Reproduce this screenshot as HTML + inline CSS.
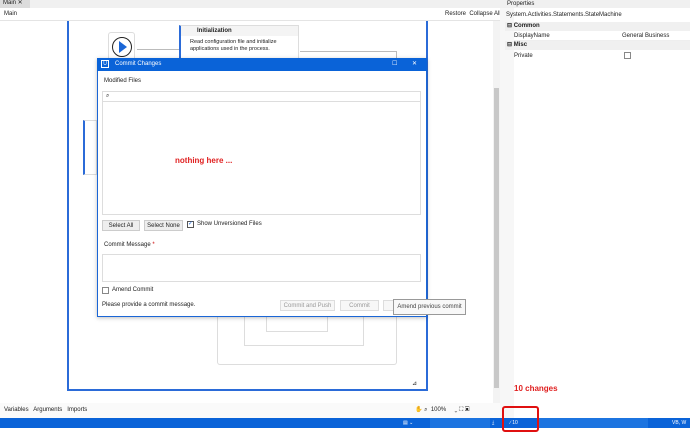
<!DOCTYPE html>
<html><head><style>
*{box-sizing:border-box;margin:0;padding:0}
body{width:690px;height:428px;overflow:hidden;background:#fff;font-family:"Liberation Sans",sans-serif;font-size:6px;color:#222;position:relative}
.a{position:absolute}
.btn{position:absolute;border:1px solid #ccc;background:#eee;font-size:6px;text-align:center;line-height:10px}
.dis{background:#f7f7f7;color:#999;border-color:#ddd}
</style></head><body>
<!-- tab bar -->
<div class="a" style="left:0;top:0;width:500px;height:8px;background:#f0f0f0"></div>
<div class="a" style="left:0;top:0;width:30px;height:8px;background:#dcdcdc;font-size:6px;line-height:7px;padding-left:3px">Main ✕</div>
<div class="a" style="left:0;top:8px;width:500px;height:13px;background:#fff;border-bottom:1px solid #e4e4e4;line-height:13px;padding-left:4px">Main</div>
<div class="a" style="left:445px;top:8px;line-height:13px">Restore&nbsp; Collapse All</div>
<!-- scrollbar -->
<div class="a" style="left:493px;top:21px;width:7px;height:382px;background:#f3f3f3"></div>
<div class="a" style="left:494px;top:88px;width:5px;height:300px;background:#c8c8c8"></div>
<!-- canvas frame -->
<div class="a" style="left:67px;top:21px;width:361px;height:370px;border:2px solid #2b6bd8;border-top:none"></div>
<!-- start circle -->
<div class="a" style="left:108px;top:32px;width:27px;height:30px;border:1px solid #ddd;border-radius:3px"></div>
<div class="a" style="left:112px;top:37px;width:20px;height:20px;border:1.5px solid #222;border-radius:50%"></div>
<div class="a" style="left:119px;top:41px;width:0;height:0;border-left:8px solid #1a66d6;border-top:6px solid transparent;border-bottom:6px solid transparent"></div>
<div class="a" style="left:137px;top:49px;width:42px;height:1px;background:#bbb"></div>
<!-- init box -->
<div class="a" style="left:179px;top:25px;width:120px;height:34px;border:1px solid #ddd;border-left:2px solid #2b6bd8;background:#fff"></div>
<div class="a" style="left:181px;top:26px;width:117px;height:10px;background:#f4f4f4;font-weight:bold;padding-left:16px;line-height:10px">Initialization</div>
<div class="a" style="left:190px;top:39px;font-size:5.5px;line-height:7px">Read configuration file and initialize<br>applications used in the process.</div>
<div class="a" style="left:300px;top:51px;width:96px;height:1px;background:#bbb"></div>
<div class="a" style="left:396px;top:51px;width:1px;height:10px;background:#bbb"></div>
<!-- left partial box -->
<div class="a" style="left:83px;top:120px;width:14px;height:55px;border:1px solid #ddd;border-left:2px solid #2b6bd8"></div>
<!-- lower nested boxes -->
<div class="a" style="left:217px;top:316px;width:180px;height:49px;border:1px solid #ddd;border-top:none;border-radius:0 0 3px 3px"></div>
<div class="a" style="left:244px;top:316px;width:120px;height:30px;border:1px solid #ddd;border-top:none"></div>
<div class="a" style="left:266px;top:316px;width:62px;height:16px;border:1px solid #ddd;border-top:none"></div>
<div class="a" style="left:412px;top:380px;font-size:6px">⊿</div>
<!-- dialog -->
<div class="a" style="left:97px;top:58px;width:330px;height:259px;border:1px solid #1a66d6;background:#fff;box-shadow:0 1px 4px rgba(0,0,0,.25)"></div>
<div class="a" style="left:97px;top:58px;width:330px;height:13px;background:#0a63d8;color:#fff;line-height:13px;padding-left:18px">Commit Changes</div>
<div class="a" style="left:101px;top:60px;width:8px;height:8px;border:1px solid #fff;color:#fff;font-size:5px;line-height:6px;text-align:center">U</div>
<div class="a" style="left:392px;top:58px;color:#fff;line-height:13px">☐</div>
<div class="a" style="left:412px;top:58px;color:#fff;line-height:13px">✕</div>
<div class="a" style="left:104px;top:78px">Modified Files</div>
<div class="a" style="left:102px;top:91px;width:319px;height:124px;border:1px solid #ddd"></div>
<div class="a" style="left:102px;top:91px;width:319px;height:11px;border:1px solid #ddd;padding-left:3px;line-height:9px">⌕</div>
<div class="a" style="left:175px;top:156px;color:#e02020;font-weight:bold;font-size:8px">nothing here ...</div>
<div class="btn" style="left:102px;top:220px;width:38px;height:11px">Select All</div>
<div class="btn" style="left:144px;top:220px;width:39px;height:11px">Select None</div>
<div class="a" style="left:187px;top:221px;width:7px;height:7px;border:1px solid #555;color:#1a66d6;font-size:6px;line-height:5px">✓</div>
<div class="a" style="left:197px;top:221px">Show Unversioned Files</div>
<div class="a" style="left:104px;top:242px">Commit Message <span style="color:#c00">*</span></div>
<div class="a" style="left:102px;top:254px;width:319px;height:28px;border:1px solid #ddd"></div>
<div class="a" style="left:102px;top:287px;width:7px;height:7px;border:1px solid #888"></div>
<div class="a" style="left:112px;top:287px">Amend Commit</div>
<div class="a" style="left:102px;top:302px">Please provide a commit message.</div>
<div class="btn dis" style="left:280px;top:300px;width:55px;height:11px">Commit and Push</div>
<div class="btn dis" style="left:340px;top:300px;width:39px;height:11px">Commit</div>
<div class="btn dis" style="left:383px;top:300px;width:20px;height:11px"></div>
<div class="a" style="left:393px;top:299px;width:73px;height:16px;border:1px solid #999;background:#f8f8f8;line-height:14px;text-align:center;color:#444">Amend previous commit</div>
<!-- bottom toolbar -->
<div class="a" style="left:0;top:403px;width:500px;height:15px;background:#fafafa;line-height:15px;padding-left:4px">Variables&nbsp;&nbsp; Arguments&nbsp;&nbsp; Imports</div>
<div class="a" style="left:415px;top:403px;line-height:15px">✋ ⌕ &nbsp;100% &nbsp; &nbsp; ⌄ ⛶ ▣</div>
<!-- right panel -->
<div class="a" style="left:500px;top:0;width:190px;height:418px;border-left:1px solid #ddd;background:#fff"></div>
<div class="a" style="left:500px;top:0;width:190px;height:8px;background:#f0f0f0;padding-left:7px;line-height:8px">Properties</div>
<div class="a" style="left:500px;top:8px;width:14px;height:410px;background:#f7f7f7"></div>
<div class="a" style="left:506px;top:10px;line-height:10px">System.Activities.Statements.StateMachine</div>
<div class="a" style="left:505px;top:22px;width:185px;height:9px;background:#f0f0f0;font-weight:bold;line-height:9px;padding-left:2px">⊟ Common</div>
<div class="a" style="left:514px;top:31px;width:176px;height:10px;line-height:10px;padding-left:0;border-bottom:1px solid #eee">DisplayName</div>
<div class="a" style="left:622px;top:31px;line-height:10px">General Business Process</div>
<div class="a" style="left:505px;top:41px;width:185px;height:9px;background:#f0f0f0;font-weight:bold;line-height:9px;padding-left:2px">⊟ Misc</div>
<div class="a" style="left:514px;top:51px;line-height:10px">Private</div>
<div class="a" style="left:624px;top:52px;width:7px;height:7px;border:1px solid #888"></div>
<div class="a" style="left:514px;top:384px;color:#e02020;font-weight:bold;font-size:8px">10 changes</div>
<!-- status bar -->
<div class="a" style="left:0;top:418px;width:690px;height:10px;background:#0a63d8"></div>
<div class="a" style="left:430px;top:418px;width:60px;height:10px;background:#1c74e0"></div>
<div class="a" style="left:538px;top:418px;width:110px;height:10px;background:#1c74e0"></div>
<div class="a" style="left:403px;top:418px;color:#fff;line-height:10px;font-size:5px">▤ ⌄</div>
<div class="a" style="left:492px;top:418px;color:#fff;line-height:10px;font-size:5px">⤓</div>
<div class="a" style="left:510px;top:418px;color:#fff;line-height:10px;font-size:5px">∕ 10</div>
<div class="a" style="left:672px;top:418px;color:#fff;line-height:10px;font-size:5px">VB, W</div>
<div class="a" style="left:502px;top:406px;width:37px;height:26px;border:2px solid #e01010;border-radius:3px"></div>
</body></html>
